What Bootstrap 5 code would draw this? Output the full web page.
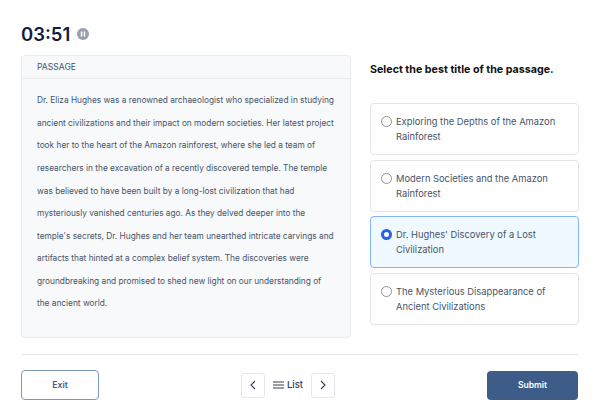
<!DOCTYPE html>
<html lang="en">
<head>
<meta charset="utf-8">
<title>Passage</title>
<link href="https://cdn.jsdelivr.net/npm/bootstrap@5.3.0/dist/css/bootstrap.min.css" rel="stylesheet">
<style>
html,body{height:419px;overflow:hidden;background:#fff}
body{font-family:Inter,"Liberation Sans",sans-serif;color:#344054}
.shell{width:558px;margin-left:21px;padding-top:21px}
.clock{font-size:18.5px;line-height:26px;font-weight:600;color:#101e3f}
.pause{width:12px;height:12px;margin-left:7px}
.panes{display:grid;grid-template-columns:330px 209px;column-gap:19px;margin-top:8px}
.passage{height:283px;background:#f8f9fb;border:1px solid #e9ebef;border-radius:4px}
.passage-head{height:23px;border-bottom:1px solid #e9ebef;padding-left:15px;font-size:8.6px;line-height:23px;color:#475467}
.passage-text{margin:0;padding:10.4px 15px 0;font-size:8.3px;line-height:22.55px;color:#475467;white-space:nowrap}
.prompt{margin:0;font-size:10.7px;line-height:14px;font-weight:700;color:#111;height:48px;padding-top:8px;box-sizing:border-box}
.opts{display:flex;flex-direction:column;gap:4.5px}
.opt{height:52px;border:1px solid #e2e4e8;border-radius:4px;display:flex;padding:10px 15px 0 10px;font-size:9.35px;line-height:15px;color:#475467;background:#fff}
.opt.on{background:#f0f9ff;border-color:#84b4f5}
.dot{flex:none;width:11px;height:11px;margin:2px 4px 0 0;border-radius:50%;border:1px solid #8b93a1;background:#fff}
.on .dot{border:3px solid #2563eb}
.rule{margin:16px 0 0;border:0;border-top:1px solid #e5e7eb;opacity:1}
.foot{margin-top:15px;height:30px}
.exit{width:78px;height:30px;padding:0;border:1px solid #7d98bd;border-radius:4px;background:#fff;color:#3b5d89;font-size:8.6px;font-weight:600}
.pager{margin-left:142px;margin-right:152px;width:94px}
.step{width:24px;height:25px;padding:0;border:1px solid #e5e7eb;border-radius:3px;background:#fff;display:flex;align-items:center;justify-content:center}
.listing{font-size:9.5px;font-weight:500;color:#344054;gap:3px;flex:1;justify-content:center}
.submit{width:91px;height:29px;padding:0;border:0;border-radius:4px;background:#3d5d88;color:#fff;font-size:8.6px;font-weight:600}
</style>
</head>
<body>
<div class="shell">
  <div class="d-flex align-items-center">
    <span class="clock">03:51</span>
    <svg class="pause" viewBox="0 0 12 12" aria-hidden="true"><circle cx="6" cy="6" r="6" fill="#98a0ae"/><rect x="3.8" y="3.5" width="1.5" height="5" fill="#fff"/><rect x="6.7" y="3.5" width="1.5" height="5" fill="#fff"/></svg>
  </div>
  <div class="panes">
    <section class="passage">
      <div class="passage-head">PASSAGE</div>
      <p class="passage-text">Dr. Eliza Hughes was a renowned archaeologist who specialized in studying<br>ancient civilizations and their impact on modern societies. Her latest project<br>took her to the heart of the Amazon rainforest, where she led a team of<br>researchers in the excavation of a recently discovered temple. The temple<br>was believed to have been built by a long-lost civilization that had<br>mysteriously vanished centuries ago. As they delved deeper into the<br>temple's secrets, Dr. Hughes and her team unearthed intricate carvings and<br>artifacts that hinted at a complex belief system. The discoveries were<br>groundbreaking and promised to shed new light on our understanding of<br>the ancient world.</p>
    </section>
    <section>
      <p class="prompt">Select the best title of the passage.</p>
      <div class="opts">
        <div class="opt"><span class="dot"></span><span>Exploring the Depths of the Amazon Rainforest</span></div>
        <div class="opt"><span class="dot"></span><span>Modern Societies and the Amazon Rainforest</span></div>
        <div class="opt on"><span class="dot"></span><span>Dr. Hughes' Discovery of a Lost Civilization</span></div>
        <div class="opt"><span class="dot"></span><span>The Mysterious Disappearance of Ancient Civilizations</span></div>
      </div>
    </section>
  </div>
  <hr class="rule">
  <div class="foot d-flex align-items-center">
    <button type="button" class="btn exit">Exit</button>
    <div class="pager d-flex align-items-center">
      <button type="button" class="btn step" aria-label="Previous"><svg width="6" height="10" viewBox="0 0 6 10"><path d="M5 1 1 5l4 4" fill="none" stroke="#344054" stroke-width="1.1"/></svg></button>
      <span class="listing d-flex align-items-center"><svg width="11" height="8" viewBox="0 0 11 8"><path d="M0 1h11M0 4h11M0 7h11" stroke="#344054" stroke-width="1"/></svg>List</span>
      <button type="button" class="btn step" aria-label="Next"><svg width="6" height="10" viewBox="0 0 6 10"><path d="m1 1 4 4-4 4" fill="none" stroke="#344054" stroke-width="1.1"/></svg></button>
    </div>
    <button type="button" class="btn submit">Submit</button>
  </div>
</div>
<script src="https://cdn.jsdelivr.net/npm/bootstrap@5.3.0/dist/js/bootstrap.bundle.min.js"></script>
</body>
</html>
